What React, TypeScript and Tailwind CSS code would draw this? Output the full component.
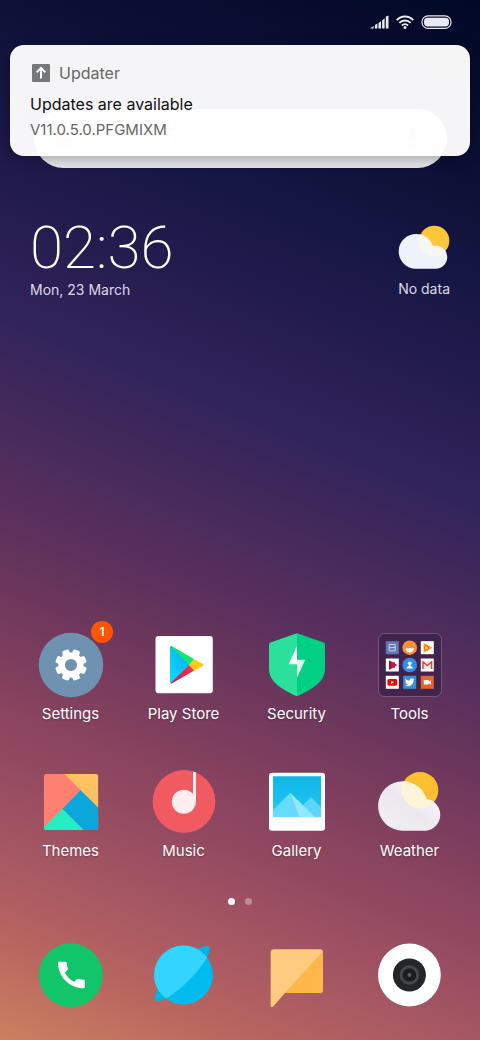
import type { ReactNode } from "react";
import { FcGoogle } from "react-icons/fc";
import { MdMic } from "react-icons/md";

function Icon({ children }: { children: ReactNode }) {
  return (
    <svg viewBox="0 0 65 65" className="block size-[65px] overflow-visible" aria-hidden="true">
      {children}
    </svg>
  );
}

const gearPoints = Array.from({ length: 8 }, (_, i) => {
  const base = 22.5 + i * 45;
  return [
    [-17, 12.6],
    [-13, 15.4],
    [-9, 16],
    [9, 16],
    [13, 15.4],
    [17, 12.6],
  ]
    .map(([offset, radius]) => {
      const a = ((base + offset - 90) * Math.PI) / 180;
      return `${(33 + radius * Math.cos(a)).toFixed(2)},${(33 + radius * Math.sin(a)).toFixed(2)}`;
    })
    .join(" ");
}).join(" ");

function SettingsIcon() {
  return (
    <Icon>
      <circle cx="33" cy="33" r="32.3" fill="#7092b1" />
      <polygon points={gearPoints} fill="#fff" />
      <circle cx="33" cy="33" r="6.1" fill="#7092b1" />
    </Icon>
  );
}

function PlayStoreIcon() {
  return (
    <Icon>
      <defs>
        <linearGradient id="playBlue" x1="1" y1="0" x2="0" y2="1">
          <stop offset="0" stopColor="#00a8f0" />
          <stop offset="1" stopColor="#12dcf5" />
        </linearGradient>
        <linearGradient id="playRed" x1="1" y1="0" x2="0" y2="1">
          <stop offset="0" stopColor="#fb3447" />
          <stop offset="1" stopColor="#c2185b" />
        </linearGradient>
      </defs>
      <rect x="4.5" y="4" width="57.3" height="57.3" rx="3" fill="#fff" />
      <path d="M20.3 14.3 38.6 33 20.3 51.4Q19 51.6 19 50V15.5Q19 14 20.3 14.3Z" fill="url(#playBlue)" />
      <path d="M19.6 14.2Q20.4 13.8 21.6 14.5L43.2 27.2 38.2 33Z" fill="#10e576" />
      <path d="M19.6 51.2Q20.4 51.8 21.6 51L43.2 38.6 38.2 33Z" fill="url(#playRed)" />
      <path d="M43.2 27.2 51.6 31.8Q53.2 33 51.6 34.2L43.2 38.6 38.2 33Z" fill="#ffc810" />
    </Icon>
  );
}

function SecurityIcon() {
  return (
    <Icon>
      <path d="M33 1.3 31.5 1.7 7 10.3Q5 11 5 13V37C5 50 18 57 31 63.6L33 64.2Z" fill="#2be09a" />
      <path d="M33 1.3 34.5 1.7 59 10.3Q61 11 61 13V37C61 50 48 57 35 63.6L33 64.2Z" fill="#00d084" />
      <path d="M33 14 24.7 32.3H33Z" fill="#fff" />
      <path d="M33 14V32.3L33 45.7 41.3 27.7H33Z" fill="#d9fbee" />
    </Icon>
  );
}

function ToolsIcon() {
  return (
    <Icon>
      <rect x="1.5" y="1.5" width="63" height="63" rx="6" fill="#3b2249" fillOpacity="0.8" stroke="#fff" strokeOpacity="0.24" strokeWidth="0.9" />
      {/* first row */}
      <rect x="8.8" y="9.2" width="13" height="13" fill="#6477b5" />
      <path d="M12.2 12.4h6v6.4h-6zM12.2 15.6h6" fill="none" stroke="#cdd5f0" strokeWidth="1" />
      <circle cx="32.7" cy="15.7" r="7.3" fill="#fb8f36" />
      <path d="M28.6 16.2h8.4a4.2 4.2 0 0 1-8.4 0Z" fill="#fff" />
      <rect x="43.8" y="9.2" width="13" height="13" fill="#fff" />
      <path d="M46.6 10.8 55.4 15.8 46.6 20.8Z" fill="#f99a1c" />
      <circle cx="49.6" cy="16" r="2.1" fill="#ffd23c" stroke="#e8562a" strokeWidth="0.9" />
      {/* second row */}
      <rect x="8.8" y="26.5" width="13" height="13" fill="#fff" />
      <path d="M12 28.4 20.6 33 12 37.8Z" fill="#e0204f" />
      <path d="M12 28.4 14.6 29.8V36.4L12 37.8Z" fill="#8d1640" />
      <path d="M14.6 30.2h3.4v5.6h-3.4z" fill="#c2184b" />
      <circle cx="32.7" cy="33" r="7.3" fill="#2f8df0" />
      <circle cx="32.7" cy="31.3" r="1.9" fill="#fff" />
      <path d="M29.4 36.4Q29.6 34.4 32 34V32h1.4V34Q35.8 34.4 36 36.4Z" fill="#fff" />
      <rect x="43.8" y="26.5" width="13" height="13" fill="#fff" />
      <path d="M45.4 29.2h9.8v7.6h-9.8z" fill="#ececec" />
      <path d="M46 37V29.8L50.3 33.6 54.6 29.8V37" fill="none" stroke="#e0443a" strokeWidth="1.5" />
      {/* third row */}
      <rect x="8.8" y="43.8" width="13" height="13" fill="#fff" />
      <rect x="10.4" y="46.9" width="9.8" height="6.8" rx="1.6" fill="#f00" />
      <path d="M14.2 48.7 17 50.3 14.2 51.9Z" fill="#fff" />
      <rect x="26.2" y="43.8" width="13" height="13" fill="#3a8fd9" />
      <path
        transform="translate(27.9 45.5) scale(0.4)"
        d="M23.953 4.57a10 10 0 01-2.825.775 4.958 4.958 0 002.163-2.723c-.951.555-2.005.959-3.127 1.184a4.92 4.92 0 00-8.384 4.482C7.69 8.095 4.067 6.13 1.64 3.162a4.822 4.822 0 00-.666 2.475c0 1.71.87 3.213 2.188 4.096a4.904 4.904 0 01-2.228-.616v.06a4.923 4.923 0 003.946 4.827 4.996 4.996 0 01-2.212.085 4.936 4.936 0 004.604 3.417 9.867 9.867 0 01-6.102 2.105c-.39 0-.779-.023-1.17-.067a13.995 13.995 0 007.557 2.209c9.053 0 13.998-7.496 13.998-13.985 0-.21 0-.42-.015-.63A9.935 9.935 0 0024 4.59z"
        fill="#fff"
      />
      <rect x="43.8" y="43.8" width="13" height="13" fill="#e8642f" />
      <path d="M46.8 48h4.8v1.5L54 48.2v4.2L51.6 51.1v1.5h-4.8z" fill="#fff" />
    </Icon>
  );
}

function ThemesIcon() {
  return (
    <Icon>
      <clipPath id="themesClip">
        <rect x="6" y="5" width="54.3" height="56" rx="2.6" />
      </clipPath>
      <g clipPath="url(#themesClip)">
        <path d="M6 5H60.3V61H6Z" fill="#ff8070" />
        <path d="M26.5 5H60.3V38.8Z" fill="#ffc263" />
        <path d="M42.5 21.3 60.3 38.8V61H45.3L24.3 40Z" fill="#0ba7db" />
        <path d="M24.3 40 45.6 61H6V58Z" fill="#27edc2" />
      </g>
    </Icon>
  );
}

function MusicIcon() {
  return (
    <Icon>
      <circle cx="33" cy="32.5" r="31.4" fill="#f15a61" />
      <circle cx="32.8" cy="32.7" r="12" fill="#ffeef0" />
      <path d="M42 2.6 45 3.4V32.7H42Z" fill="#ffeef0" />
    </Icon>
  );
}

function GalleryIcon() {
  return (
    <Icon>
      <rect x="5" y="3.7" width="56" height="58" rx="3" fill="#fff" />
      <linearGradient id="gallerySky" x1="0" y1="0" x2="0" y2="1">
        <stop offset="0" stopColor="#12b4e6" />
        <stop offset="1" stopColor="#1ecbf6" />
      </linearGradient>
      <path d="M9 7.3H57V48H9Z" fill="url(#gallerySky)" />
      <path d="M34 41 47 28.3 57 38.3V48H34Z" fill="#5bd5fa" />
      <path d="M9 41 26.3 23.7 36 48H9Z" fill="#66dbfd" />
      <path d="M26.3 23.7 50.7 48H35.3Z" fill="#94e8ff" />
    </Icon>
  );
}

function WeatherIcon() {
  return (
    <Icon>
      <linearGradient id="cloudShade" x1="0" y1="1" x2="1" y2="0">
        <stop offset="0" stopColor="#f5f1f4" />
        <stop offset="0.5" stopColor="#eee7ef" />
        <stop offset="1" stopColor="#fff" />
      </linearGradient>
      <clipPath id="weatherCloud">
        <path d="M26 61.7A24.7 24.7 0 1 1 49.5 30.1A15.9 15.9 0 0 1 48.7 61.7Z" />
      </clipPath>
      <circle cx="43" cy="21.3" r="18.3" fill="#fcc02f" />
      <g clipPath="url(#weatherCloud)">
        <path d="M0 10H65V65H0Z" fill="url(#cloudShade)" />
        <circle cx="43" cy="21.3" r="18.3" fill="#fef4d8" />
      </g>
    </Icon>
  );
}

function PhoneIcon() {
  return (
    <Icon>
      <circle cx="32.8" cy="32.3" r="32" fill="#12c46a" />
      <path
        d="M20.8 18.7H27.6Q28.4 18.7 28.5 19.6C28.7 22 29.2 24 29.8 25.6Q30.1 26.5 29.5 27.1L26.9 29.6C29 33.9 32 36.8 36.1 38.9L38.6 36.2Q39.2 35.6 40.1 35.8C42 36.4 43.8 36.7 45.9 36.8Q46.7 36.9 46.7 37.7V44.5Q46.7 45.3 45.8 45.3C31.8 45.3 20 34 20 19.5Q20 18.7 20.8 18.7Z"
        fill="#fff"
      />
    </Icon>
  );
}

function BrowserIcon() {
  return (
    <Icon>
      <clipPath id="planetClip">
        <circle cx="32.5" cy="32" r="29.4" />
      </clipPath>
      <ellipse cx="31.3" cy="30.5" rx="37.8" ry="9.5" transform="rotate(-45 31.3 30.5)" fill="#00b4e8" />
      <circle cx="32.5" cy="32" r="29.4" fill="#00bbee" />
      <g clipPath="url(#planetClip)" fill="#33d4ff">
        <path d="M-2 63.8V-6H67.8Z" />
        <ellipse cx="31.3" cy="30.5" rx="37.8" ry="9.5" transform="rotate(-45 31.3 30.5)" />
      </g>
    </Icon>
  );
}

function MessagesIcon() {
  return (
    <Icon>
      <path d="M9.5 6.5H56.5Q59 6.5 59 9V47.5Q59 50 56.5 50H20.8L9.3 63.2Q6.8 65 6.8 62.4V9Q6.8 6.5 9.5 6.5Z" fill="#ffb74c" />
      <path d="M9.5 6.5H56.5Q58.6 6.6 58.8 8.6L20.8 50 9.3 63.2Q6.8 65 6.8 62.4V9Q6.8 6.5 9.5 6.5Z" fill="#ffcb80" />
    </Icon>
  );
}

function CameraIcon() {
  return (
    <Icon>
      <circle cx="32.4" cy="32" r="31.4" fill="#fff" />
      <circle cx="32.4" cy="32" r="16.5" fill="#242628" />
      <circle cx="32.4" cy="32" r="8.3" fill="#1b1c1e" stroke="#45474b" strokeWidth="3" />
      <circle cx="32.4" cy="32" r="1.9" fill="#5c5e61" />
    </Icon>
  );
}

function AppButton({ label, badge, children }: { label: string; badge?: string; children: ReactNode }) {
  return (
    <button type="button" className="flex flex-col items-center gap-[7px]">
      <span className="relative block">
        {children}
        {badge && (
          <span className="absolute -top-[11px] -right-[10px] flex size-[22px] items-center justify-center rounded-full bg-[#ff5500] text-xs font-semibold">
            {badge}
          </span>
        )}
      </span>
      <span className="text-[15px] leading-5 [text-shadow:0_1px_2px_rgb(0_0_0/0.3)]">{label}</span>
    </button>
  );
}

function DockButton({ label, children }: { label: string; children: ReactNode }) {
  return (
    <button type="button" aria-label={label} className="flex justify-center">
      {children}
    </button>
  );
}

function StatusBar() {
  return (
    <header className="flex h-11 items-center justify-end gap-[7px] pr-7">
      <svg viewBox="0 0 19 14" className="h-[14px] w-[19px]" fill="#e9e9f2" aria-label="Signal">
        <path d="M0 13.4 3.6 11V13.4ZM4.9 10 7.4 8.5V13.4H4.9ZM8.5 7.9 11 6.2V13.4H8.5ZM12.1 5.4 14.6 3.2V13.4H12.1ZM15.8 1.4 18.5 0.4V13.4H15.8Z" />
      </svg>
      <svg viewBox="0 0 18 14" className="h-[14px] w-[18px]" fill="none" stroke="#e9e9f2" strokeWidth="1.9" aria-label="Wi-Fi">
        <path d="M0.7 5.1C5.2 0.2 12.8 0.2 17.3 5.1M3.3 7.9C6.4 4.6 11.6 4.6 14.7 7.9M5.9 10.5C7.6 8.8 10.4 8.8 12.1 10.5" />
        <circle cx="9" cy="12.4" r="1.5" fill="#e9e9f2" stroke="none" />
      </svg>
      <svg viewBox="0 0 31 14" className="h-[14px] w-[31px]" aria-label="Battery">
        <rect x="1" y="0.8" width="29" height="12.6" rx="6" fill="none" stroke="#e9e9f2" strokeWidth="1.2" />
        <rect x="3" y="2.8" width="25" height="8.6" rx="3.6" fill="#e9e9f2" />
      </svg>
    </header>
  );
}

function Notification() {
  return (
    <section
      aria-label="Notification"
      className="absolute inset-x-[10px] top-[45px] rounded-[14px] bg-white/96 px-5 py-4 shadow-[0_2px_14px_rgb(0_0_0/0.3)]"
    >
      <div className="flex h-6 items-center gap-[7px] text-[#666]">
        <svg viewBox="0 0 22 22" className="size-[22px]" aria-hidden="true">
          <rect x="2" y="2" width="18" height="18" rx="1" fill="#77787a" />
          <path d="M11 16.4V6.4M6.6 10.4 11 6 15.4 10.4" fill="none" stroke="#fff" strokeWidth="2" />
        </svg>
        <span className="text-base">Updater</span>
      </div>
      <h1 className="mt-[7px] text-base leading-6 text-[#111]">Updates are available</h1>
      <p className="mt-1 text-[15px] leading-5 text-[#666]">V11.0.5.0.PFGMIXM</p>
    </section>
  );
}

export default function App() {
  return (
    <main className="relative flex min-h-screen flex-col bg-[linear-gradient(202deg,#020827_0%,#0d1036_15%,#171745_24%,#241c4e_32%,#31245a_41%,#472b5c_50%,#5d315c_58%,#6f385c_64%,#84415e_71%,#984d61_79%,#a75863_85%,#b96660_92%,#cb8060_100%)] font-['Inter','Liberation_Sans',sans-serif] text-white">
      <StatusBar />

      <form role="search" className="mt-[65px] mr-[33px] ml-[34px] flex h-[59px] items-center gap-3 rounded-full bg-[#e4e4e8] px-5">
        <FcGoogle className="size-5 opacity-50" aria-hidden="true" />
        <input type="search" aria-label="Search" className="min-w-0 flex-1 bg-transparent outline-none" />
        <button type="button" aria-label="Voice search">
          <MdMic className="size-7 text-[#4285f4] opacity-50" />
        </button>
      </form>

      <Notification />

      <section className="mt-[50px] flex items-start justify-between px-[30px]">
        <div>
          <time className="block font-['Roboto','Liberation_Sans',sans-serif] text-[60px] leading-[60px] font-extralight">02:36</time>
          <p className="mt-0.5 text-sm leading-5 text-[#dcd9e6]">Mon, 23 March</p>
        </div>
        <div className="flex flex-col items-end gap-[9px] pt-[7px]">
          <svg viewBox="0 0 53 45" className="h-[45px] w-[53px]" aria-hidden="true">
            <clipPath id="widgetCloud">
              <path d="M18.5 43.7A17.4 17.4 0 1 1 35.7 21.1A11.5 11.5 0 1 1 38.7 43.7Z" />
            </clipPath>
            <circle cx="37.3" cy="15.7" r="15" fill="#ffc738" />
            <g clipPath="url(#widgetCloud)">
              <path d="M0 0H53V45H0Z" fill="#edf2fb" />
              <circle cx="37.3" cy="15.7" r="16" fill="#f8f7f3" />
            </g>
          </svg>
          <p className="text-sm leading-5 text-[#dcd9e6]">No data</p>
        </div>
      </section>

      <nav aria-label="Apps" className="mt-auto grid grid-cols-4 gap-y-[45px] px-[14px] pt-10">
        <AppButton label="Settings" badge="1"><SettingsIcon /></AppButton>
        <AppButton label="Play Store"><PlayStoreIcon /></AppButton>
        <AppButton label="Security"><SecurityIcon /></AppButton>
        <AppButton label="Tools"><ToolsIcon /></AppButton>
        <AppButton label="Themes"><ThemesIcon /></AppButton>
        <AppButton label="Music"><MusicIcon /></AppButton>
        <AppButton label="Gallery"><GalleryIcon /></AppButton>
        <AppButton label="Weather"><WeatherIcon /></AppButton>
      </nav>

      <div className="mt-[37px] flex justify-center gap-[10px]">
        <span className="size-[7px] rounded-full bg-white" />
        <span className="size-[7px] rounded-full bg-white/35" />
      </div>

      <nav aria-label="Dock" className="mt-[38px] mb-8 grid grid-cols-4 px-[14px]">
        <DockButton label="Phone"><PhoneIcon /></DockButton>
        <DockButton label="Browser"><BrowserIcon /></DockButton>
        <DockButton label="Messages"><MessagesIcon /></DockButton>
        <DockButton label="Camera"><CameraIcon /></DockButton>
      </nav>
    </main>
  );
}
